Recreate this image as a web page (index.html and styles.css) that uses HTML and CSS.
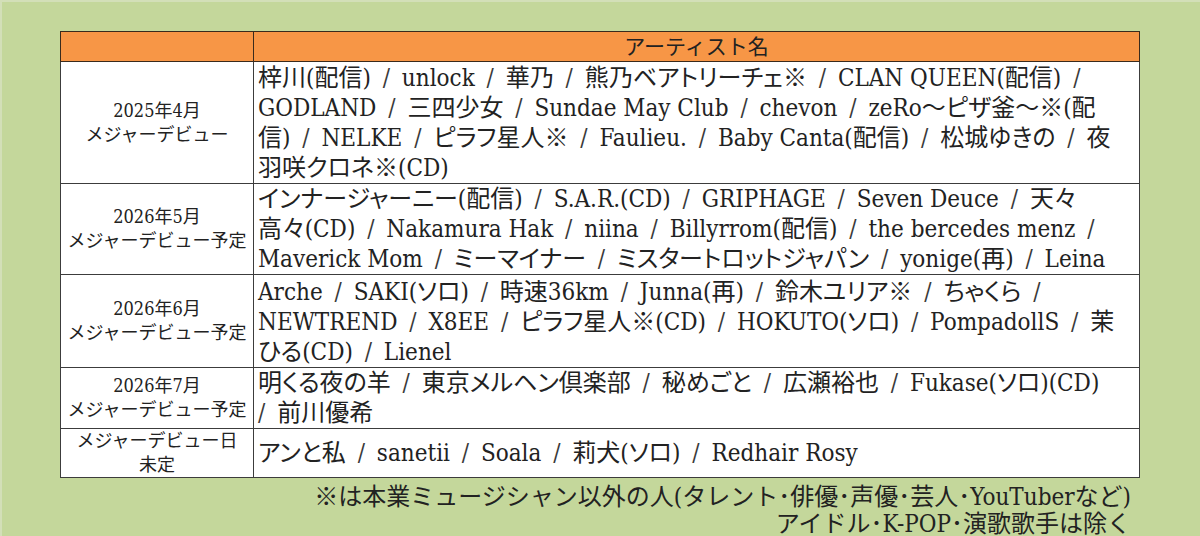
FILE: index.html
```html
<!DOCTYPE html>
<html lang="ja">
<head>
<meta charset="utf-8">
<title>メジャーデビュー一覧</title>
<link rel="stylesheet" href="styles.css">
</head>
<body>
<div class="page">
  <table class="debut">
    <colgroup><col class="col-date"><col class="col-names"></colgroup>
    <thead>
      <tr class="row-head"><th class="h-date"></th><th class="h-names">アーティスト名</th></tr>
    </thead>
    <tbody>
      <tr class="row-a">
        <td class="date">2025年4月<br>メジャーデビュー</td>
        <td class="names">梓川(配信) <span class="sep">/</span> unlock <span class="sep">/</span> 華乃 <span class="sep">/</span> 熊乃ベアトリーチェ※ <span class="sep">/</span> CLAN QUEEN(配信) <span class="sep">/</span><br>GODLAND <span class="sep">/</span> 三四少女 <span class="sep">/</span> Sundae May Club <span class="sep">/</span> chevon <span class="sep">/</span> zeRo～ピザ釜～※(配<br>信) <span class="sep">/</span> NELKE <span class="sep">/</span> ピラフ星人※ <span class="sep">/</span> Faulieu. <span class="sep">/</span> Baby Canta(配信) <span class="sep">/</span> 松城ゆきの <span class="sep">/</span> 夜<br>羽咲クロネ※(CD)</td>
      </tr>
      <tr class="row-b">
        <td class="date">2026年5月<br>メジャーデビュー予定</td>
        <td class="names">インナージャーニー(配信) <span class="sep">/</span> S.A.R.(CD) <span class="sep">/</span> GRIPHAGE <span class="sep">/</span> Seven Deuce <span class="sep">/</span> 天々<br>高々(CD) <span class="sep">/</span> Nakamura Hak <span class="sep">/</span> niina <span class="sep">/</span> Billyrrom(配信) <span class="sep">/</span> the bercedes menz <span class="sep">/</span><br>Maverick Mom <span class="sep">/</span> ミーマイナー <span class="sep">/</span> ミスタートロットジャパン <span class="sep">/</span> yonige(再) <span class="sep">/</span> Leina</td>
      </tr>
      <tr class="row-c">
        <td class="date">2026年6月<br>メジャーデビュー予定</td>
        <td class="names">Arche <span class="sep">/</span> SAKI(ソロ) <span class="sep">/</span> 時速36km <span class="sep">/</span> Junna(再) <span class="sep">/</span> 鈴木ユリア※ <span class="sep">/</span> ちゃくら <span class="sep">/</span><br>NEWTREND <span class="sep">/</span> X8EE <span class="sep">/</span> ピラフ星人※(CD) <span class="sep">/</span> HOKUTO(ソロ) <span class="sep">/</span> PompadollS <span class="sep">/</span> 茉<br>ひる(CD) <span class="sep">/</span> Lienel</td>
      </tr>
      <tr class="row-d">
        <td class="date">2026年7月<br>メジャーデビュー予定</td>
        <td class="names">明くる夜の羊 <span class="sep">/</span> 東京メルヘン倶楽部 <span class="sep">/</span> 秘めごと <span class="sep">/</span> 広瀬裕也 <span class="sep">/</span> Fukase(ソロ)(CD)<br><span class="sep sep-lead">/</span> 前川優希</td>
      </tr>
      <tr class="row-e">
        <td class="date">メジャーデビュー日<br>未定</td>
        <td class="names">アンと私 <span class="sep">/</span> sanetii <span class="sep">/</span> Soala <span class="sep">/</span> 莉犬(ソロ) <span class="sep">/</span> Redhair Rosy</td>
      </tr>
    </tbody>
  </table>
  <div class="notes">
    <p class="note">※は本業ミュージシャン以外の人(タレント･俳優･声優･芸人･YouTuberなど)</p>
    <p class="note">アイドル･K-POP･演歌歌手は除く</p>
  </div>
</div>
</body>
</html>
```

FILE: styles.css
```css
html, body {
  margin: 0;
  padding: 0;
}

body {
  background: #c4d79b;
  color: #222222;
  font-family: "DejaVu Serif Condensed", "Liberation Serif", "Noto Sans CJK JP", serif;
}

.page {
  height: 536px;
  box-sizing: border-box;
  border-top: 2px solid #d3dfb8;
  border-left: 2px solid #d3dfb8;
  padding: 29px 0 0 58px;
}

.debut {
  border-collapse: collapse;
  table-layout: fixed;
  width: 1080px;
  background: #ffffff;
  border: 1px solid #1e1e1e;
}

.col-date {
  width: 193px;
}

.debut th,
.debut td {
  border: 1px solid #3c3c3c;
  padding: 0;
}

.row-head th {
  height: 29px;
  background: #f79646;
  font-weight: normal;
  font-size: 21px;
  line-height: 28px;
  text-align: center;
  vertical-align: middle;
  border-color: #3a2a1c;
}

.row-a { height: 122px; }
.row-b { height: 91px; }
.row-c { height: 93px; }
.row-d { height: 60px; }
.row-e { height: 47px; }

.date {
  font-size: 18px;
  line-height: 24px;
  text-align: center;
  vertical-align: middle;
}

.names {
  font-size: 24px;
  line-height: 30px;
  padding: 0 4px !important;
  white-space: nowrap;
  vertical-align: bottom;
  text-align: left;
  font-feature-settings: "palt";
}

.sep {
  margin: 0 5px;
  color: #3a3a3a;
}

.sep-lead {
  margin-left: 0;
}

.row-e .names {
  vertical-align: middle;
}

.notes {
  width: 1080px;
  box-sizing: border-box;
  padding: 6px 9px 0 0;
  text-align: right;
  font-size: 24px;
  line-height: 27px;
}

.note {
  margin: 0;
}
```
